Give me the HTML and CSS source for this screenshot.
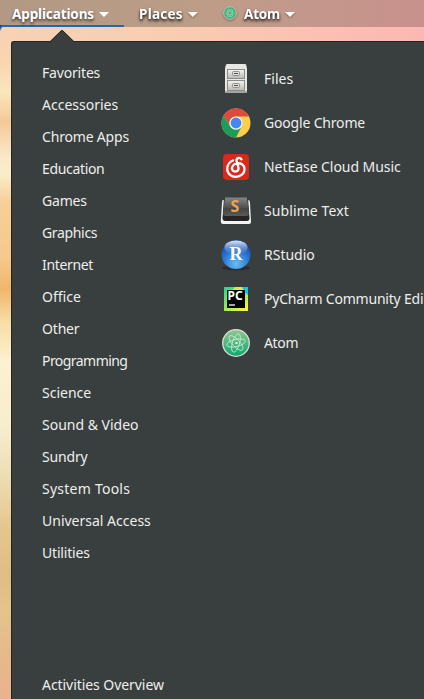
FILE: index.html
```
<!DOCTYPE html>
<html lang="en">
<head>
<meta charset="utf-8">
<title>Applications</title>
<link rel="stylesheet" href="styles.css">
</head>
<body>
<header class="panel">
  <div class="tab apps"><span>Applications</span><i class="caret"></i></div>
  <div class="tab places"><span>Places</span><i class="caret"></i></div>
  <div class="tab atom">
    <svg class="mini" viewBox="0 0 30 30"><circle cx="15" cy="15" r="13.6" fill="#4dad7c" stroke="#b5d1b4" stroke-width="2"/><g fill="none" stroke="#8fd0a8" stroke-width="1.500"><ellipse cx="15" cy="15" rx="9" ry="4"/><ellipse cx="15" cy="15" rx="9" ry="4" transform="rotate(60 15 15)"/><ellipse cx="15" cy="15" rx="9" ry="4" transform="rotate(120 15 15)"/></g></svg>
    <span>Atom</span><i class="caret"></i>
  </div>
</header>
<div class="desktop">
  <svg class="corner" viewBox="0 0 6 6"><path d="M0 0H6V.5Q1 .5 0 6Z" fill="#1f69b5"/><path d="M0 0H2L0 1Z" fill="#101820"/></svg>
  <svg class="pointer" viewBox="0 0 26 13"><path d="M0 13V12L12 .5H14L26 12V13Z" fill="#393f3f"/><path d="M0 12H1L12 1Q13 0 14 1L25 12H26" fill="none" stroke="#292825"/></svg>
  <main class="menu">
    <nav class="categories">
      <ul>
        <li class="snug">Favorites</li><li>Accessories</li><li class="snug">Chrome Apps</li><li class="tight">Education</li>
        <li class="snug">Games</li><li class="tight">Graphics</li><li class="tight">Internet</li><li>Office</li><li class="snug">Other</li>
        <li class="tightest">Programming</li><li>Science</li><li>Sound &amp; Video</li><li class="snug">Sundry</li>
        <li class="loose">System Tools</li><li>Universal Access</li><li class="snug">Utilities</li>
      </ul>
      <div class="overview">Activities Overview</div>
    </nav>
    <ul class="launchers">
      <li>
        <svg viewBox="0 0 32 32"><defs><linearGradient id="cab" x2="0" y2="1"><stop stop-color="#f4f4f1"/><stop offset="1" stop-color="#b9b9b4"/></linearGradient></defs>
          <path d="M7 1H25Q26.500 1 26.500 3L27 6V30H5V6L5.500 3Q6 1 7 1Z" fill="#e7e7e3"/><path d="M5 28H27V30H5Z" fill="#a5a5a0"/>
          <g fill="url(#cab)" stroke="#8b8c86"><rect x="7.500" y="6.500" width="17" height="9"/><rect x="7.500" y="17.500" width="17" height="10"/></g>
          <g fill="#deded9" stroke="#92928d"><rect x="12.500" y="8.500" width="7" height="4" rx="1"/><rect x="12.500" y="20.500" width="7" height="4" rx="1"/></g><path d="M14 10.500h4M14 22.500h4" stroke="#555"/></svg>
        <span>Files</span></li>
      <li>
        <svg viewBox="0 0 32 32"><circle cx="16" cy="16" r="14.500" fill="#fdce49"/><path d="M3.440 8.750A14.500 14.500 0 0 1 28.900 9.500H16A6.500 6.500 0 0 0 10.200 19.300Z" fill="#dc4b3e"/><path d="M3.440 8.750A14.500 14.500 0 0 0 16 30.500L21.700 19.300A6.500 6.500 0 0 1 10.200 19.300Z" fill="#189d5b"/><circle cx="16" cy="16" r="6.600" fill="#f1f1f1"/><circle cx="16" cy="16" r="5.400" fill="#4487f2"/></svg>
        <span class="snug">Google Chrome</span></li>
      <li>
        <svg viewBox="0 0 32 32"><rect x="3" y="3" width="26" height="26" rx="4" fill="#dc271b"/><path d="M13 9.500C6.500 12 5.700 20 10 23.800C15 28.200 24.500 25 24.500 18C24.500 14 21 12 17.500 12.300C13.500 12.700 11 16 12.300 18.800C13.500 21.500 18.500 21 18.500 17.500C18.500 15 16.500 12 16.500 9.500C16.500 6.500 20 6.200 21.500 8.400" fill="none" stroke="#fff" stroke-width="2.300" stroke-linecap="round"/></svg>
        <span class="music">NetEase Cloud Music</span></li>
      <li>
        <svg viewBox="0 0 32 32"><defs><linearGradient id="key" x2="0" y2="1"><stop stop-color="#858585"/><stop offset=".55" stop-color="#505050"/><stop offset=".6" stop-color="#444"/><stop offset="1" stop-color="#5a5a5a"/></linearGradient></defs><path d="M3 5Q2 5 2 8L.800 26Q.800 29 3 29H29Q31.200 29 31 26L30 8Q30 5 28 5Z" fill="#f3f3f3"/><path d="M4 3H28L29.500 23Q29.500 26 27 26H5Q2.500 26 2.500 23Z" fill="#252525"/><path d="M5 2.500H27L29 18.500Q29 21 26 21H6Q3 21 3 18.500Z" fill="url(#key)"/><text class="sublime" x="10.500" y="17">S</text></svg>
        <span class="sub">Sublime Text</span></li>
      <li>
        <svg viewBox="0 0 32 32"><defs><radialGradient id="orb" cy=".82" r=".75"><stop stop-color="#69bdf3"/><stop offset=".55" stop-color="#307bd2"/><stop offset="1" stop-color="#164aae"/></radialGradient><linearGradient id="gloss" x2="0" y2="1"><stop stop-color="#e3edfa"/><stop offset="1" stop-color="#4c80cd" stop-opacity=".25"/></linearGradient></defs><ellipse cx="16" cy="29" rx="14" ry="2.300" fill="#292e31"/><circle cx="16" cy="15.500" r="14.500" fill="url(#orb)"/><ellipse cx="16" cy="8.500" rx="11.500" ry="7" fill="url(#gloss)"/><text class="rletter" x="9.500" y="21">R</text></svg>
        <span>RStudio</span></li>
      <li>
        <svg viewBox="0 0 32 32"><defs><linearGradient id="py" x2=".8" y2="1"><stop stop-color="#20d68a"/><stop offset=".5" stop-color="#8be75c"/><stop offset="1" stop-color="#f5f34a"/></linearGradient></defs><path d="M4 4H28V28H4Z" fill="url(#py)"/><path d="M22 4H28V12L24 9Z" fill="#0ac7eb"/><path d="M15 4H22L24 8H12Z" fill="#d8ea45"/><rect x="7" y="7" width="18" height="18"/><text class="pc" x="7.500" y="17">PC</text><path d="M9 22h6" stroke="#ddd" stroke-width="1.500"/></svg>
        <span class="pycharm">PyCharm Community Edi</span></li>
      <li>
        <svg viewBox="0 0 32 32"><defs><linearGradient id="atom" x2="0" y2="1"><stop stop-color="#92c891"/><stop offset="1" stop-color="#0aa870"/></linearGradient></defs><circle cx="16" cy="16" r="13.300" fill="url(#atom)" stroke="#dedfd6" stroke-width="1.300"/><g fill="none" stroke="#cdebd2" stroke-width=".8"><ellipse cx="16" cy="16" rx="9.500" ry="3.600" transform="rotate(-13 16 16)"/><ellipse cx="16" cy="16" rx="9.500" ry="3.600" transform="rotate(47 16 16)"/><ellipse cx="16" cy="16" rx="9.500" ry="3.600" transform="rotate(107 16 16)"/></g><circle cx="16.500" cy="16" r="1.300" fill="#e8f5df"/></svg>
        <span class="tight">Atom</span></li>
    </ul>
  </main>
</div>
</body>
</html>
```
FILE: styles.css
```
* { box-sizing: border-box; }
body {
  margin: 0;
  height: 699px;
  overflow: hidden;
  display: flex;
  flex-direction: column;
  font: 14px "Noto Sans", sans-serif;
  color: #eeeeec;
}
ul { list-style: none; margin: 0; padding: 0; }
.snug { letter-spacing: -.18px; }
.tight { letter-spacing: -.34px; }
.tightest { letter-spacing: -.55px; }
.loose { letter-spacing: .24px; }
.music { letter-spacing: -.05px; }
.sub { letter-spacing: .1px; }
.pycharm { letter-spacing: -.21px; }
.panel {
  height: 27px;
  flex: none;
  display: flex;
  background: linear-gradient(90deg, #b19984, #bc9d87 45%, #c3988c 70%, #c8918c);
  font-weight: 700;
  font-size: 13.5px;
  color: #fff;
  text-shadow: 0 2px 3px #000a;
}
.tab { display: flex; align-items: center; white-space: nowrap; filter: drop-shadow(0 1px 1px #0005); }
.apps { width: 124px; padding-left: 12px; border-bottom: 2px solid #1e69b5; padding-top: 2px; letter-spacing: -.12px; filter: none; }
.places { padding-left: 15px; width: 99px; letter-spacing: .25px; }
.atom { letter-spacing: -.2px; }
.caret {
  width: 10px; height: 5px; margin: 2px 0 0 5px;
  background: #fff;
  clip-path: polygon(0 0, 100% 0, 50% 100%);
}
.mini { width: 14px; height: 14px; margin: -2px 7px 0 0; }
.desktop {
  position: relative;
  flex: 1;
  padding: 14px 0 0 11px;
  background:
    linear-gradient(90deg, #f8d2b4, #f9cdb2 40%, #fbc0b3 75%, #fbb8b3) 0 0 / 100% 14px no-repeat,
    linear-gradient(#f8d2b4 0, #f9d5b0 35px, #fae6bd 65px, #f3c999 95px, #fae9c8 130px, #fbecca 148px, #f7cf98 175px, #f6c98d 230px, #f0b66c 262px, #f8dda5 295px, #fcf1d2 335px, #f7edcf 400px, #edddb3 450px, #e5c78e 500px, #dfbd84 550px, #e4c48c 580px, #e6b989 630px, #ebb290 672px);
}
.corner { position: absolute; left: 0; top: -2px; width: 6px; height: 7px; }
.pointer { position: absolute; left: 49px; top: 3px; width: 26px; height: 13px; z-index: 1; }
.menu {
  height: 658px;
  display: flex;
  padding-left: 30px;
  background: #393f3f;
  border: solid #24231f;
  border-width: 1px 0 0 1px;
  border-top-left-radius: 3px;
}
.categories { width: 178px; flex: none; padding-top: 15px; }
.categories li { height: 32px; line-height: 32px; }
.overview { margin-top: 100px; line-height: 32px; letter-spacing: -.06px; }
.launchers { padding-top: 15px; }
.launchers li { height: 44px; display: flex; align-items: center; gap: 12px; white-space: nowrap; }
.launchers span { padding-bottom: 1px; }
.launchers svg { width: 32px; height: 32px; flex: none; }
.sublime { font: bold 16px "Noto Sans", sans-serif; fill: #f1a24b; }
.rletter { font: bold 18px "Liberation Serif", serif; fill: #fff; }
.pc { font: bold 12px "Noto Sans", sans-serif; fill: #fff; }
```
